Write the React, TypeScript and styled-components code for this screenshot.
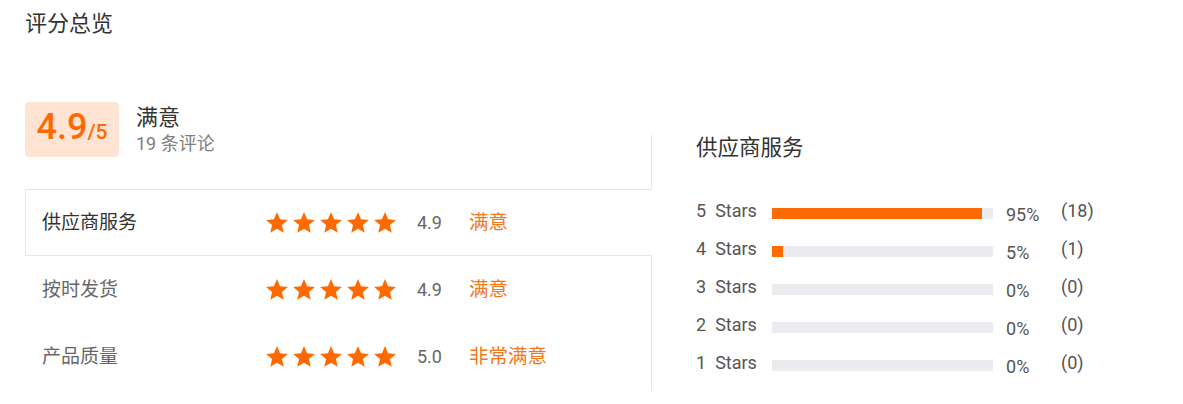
import React from 'react';
import styled, { createGlobalStyle } from 'styled-components';

const GlobalStyle = createGlobalStyle`
  html, body { margin: 0; padding: 0; background: #fff; }
  body { font-family: Roboto, "Noto Sans CJK SC", sans-serif; color: #333; }
  * { box-sizing: border-box; }
`;

const Page = styled.div`
  padding: 9px 0 0 25px;
`;

const Title = styled.h2`
  margin: 0;
  font-size: 22px;
  line-height: 30px;
  font-weight: 400;
  color: #333;
`;

const Body = styled.div`
  display: flex;
  align-items: flex-start;
  margin-top: 63px;
`;

const LeftCol = styled.div`
  width: 626px;
  flex: none;
  display: flex;
  flex-direction: column;
`;

const Summary = styled.div`
  display: flex;
  align-items: center;
  gap: 17px;
  height: 55px;
  margin-bottom: 32px;
`;

const ScoreBox = styled.div`
  width: 94px;
  height: 55px;
  border-radius: 4px;
  background: #ffe4d4;
  color: #ff6a00;
  display: flex;
  align-items: center;
  justify-content: center;
`;

const ScoreValue = styled.span`
  font-size: 36px;
  line-height: 36px;
  font-weight: 500;
`;

const ScoreMax = styled.span`
  font-size: 21px;
  font-weight: 500;
`;

const SummaryText = styled.div`
  display: flex;
  flex-direction: column;
`;

const Verdict = styled.div`
  font-size: 22px;
  line-height: 28px;
  color: #333;
`;

const ReviewCount = styled.div`
  font-size: 18px;
  line-height: 24px;
  color: #808080;
`;

const Tab = styled.div<{ $active?: boolean }>`
  display: flex;
  align-items: center;
  height: 67px;
  padding-left: 16px;
  background: #fff;
  border: 1px solid ${(p) => (p.$active ? '#e6e6e6' : 'transparent')};
  border-right-color: ${(p) => (p.$active ? '#fff' : 'transparent')};
  margin-right: ${(p) => (p.$active ? '-1px' : '0')};
  position: relative;
  z-index: ${(p) => (p.$active ? 1 : 0)};
`;

const TabLabel = styled.span<{ $active?: boolean }>`
  width: 224px;
  flex: none;
  font-size: 19px;
  line-height: 24px;
  color: ${(p) => (p.$active ? '#333' : '#666')};
`;

const Stars = styled.span`
  display: flex;
  gap: 5px;
  flex: none;
`;

const StarIcon = styled.svg`
  display: block;
  width: 22px;
  height: 21px;
  fill: #ff6a00;
`;

const RatingValue = styled.span`
  margin-left: 21px;
  width: 52px;
  flex: none;
  font-size: 18px;
  line-height: 24px;
  color: #666;
`;

const RatingWord = styled.span`
  font-size: 19.5px;
  line-height: 24px;
  color: #f0781e;
`;

const Panel = styled.section`
  flex: 1;
  margin-top: 33px;
  border-left: 1px solid #e6e6e6;
  padding: 0 0 9px 44px;
`;

const PanelTitle = styled.h3`
  margin: 0 0 31px;
  font-size: 21.5px;
  line-height: 26px;
  font-weight: 400;
  color: #333;
`;

const DistRow = styled.div`
  display: flex;
  align-items: center;
  height: 38px;
  font-size: 18px;
  line-height: 24px;
  color: #555;
`;

const StarLabel = styled.span`
  width: 76px;
  flex: none;
`;

const StarWord = styled.span`
  margin-left: 9px;
`;

const Track = styled.div`
  width: 221px;
  height: 11px;
  flex: none;
  margin-top: 4px;
  background: #ebecf0;
`;

const Fill = styled.div`
  height: 100%;
  background: #ff6a00;
`;

const Pct = styled.span`
  margin-left: 13px;
  width: 55px;
  flex: none;
  margin-top: 7px;
`;

const Count = styled.span``;

const Star = () => (
  <StarIcon viewBox="2 2 20 19.27" aria-hidden="true">
    <path d="M12 17.27L18.18 21l-1.64-7.03L22 9.24l-7.19-.61L12 2 9.19 8.63 2 9.24l5.46 4.73L5.82 21z" />
  </StarIcon>
);

const FiveStars = () => (
  <Stars>
    {[0, 1, 2, 3, 4].map((i) => (
      <Star key={i} />
    ))}
  </Stars>
);

const categories = [
  { label: '供应商服务', score: '4.9', word: '满意', active: true },
  { label: '按时发货', score: '4.9', word: '满意', active: false },
  { label: '产品质量', score: '5.0', word: '非常满意', active: false },
];

const distribution = [
  { stars: 5, pct: 95, count: 18 },
  { stars: 4, pct: 5, count: 1 },
  { stars: 3, pct: 0, count: 0 },
  { stars: 2, pct: 0, count: 0 },
  { stars: 1, pct: 0, count: 0 },
];

export default function App() {
  return (
    <>
      <GlobalStyle />
      <Page>
        <Title>评分总览</Title>
        <Body>
          <LeftCol>
            <Summary>
              <ScoreBox>
                <ScoreValue>
                  4.9<ScoreMax>/5</ScoreMax>
                </ScoreValue>
              </ScoreBox>
              <SummaryText>
                <Verdict>满意</Verdict>
                <ReviewCount>19 条评论</ReviewCount>
              </SummaryText>
            </Summary>
            {categories.map((c) => (
              <Tab key={c.label} $active={c.active}>
                <TabLabel $active={c.active}>{c.label}</TabLabel>
                <FiveStars />
                <RatingValue>{c.score}</RatingValue>
                <RatingWord>{c.word}</RatingWord>
              </Tab>
            ))}
          </LeftCol>
          <Panel>
            <PanelTitle>供应商服务</PanelTitle>
            {distribution.map((d) => (
              <DistRow key={d.stars}>
                <StarLabel>
                  {d.stars}
                  <StarWord>Stars</StarWord>
                </StarLabel>
                <Track>
                  <Fill style={{ width: `${d.pct}%` }} />
                </Track>
                <Pct>{d.pct}%</Pct>
                <Count>({d.count})</Count>
              </DistRow>
            ))}
          </Panel>
        </Body>
      </Page>
    </>
  );
}
